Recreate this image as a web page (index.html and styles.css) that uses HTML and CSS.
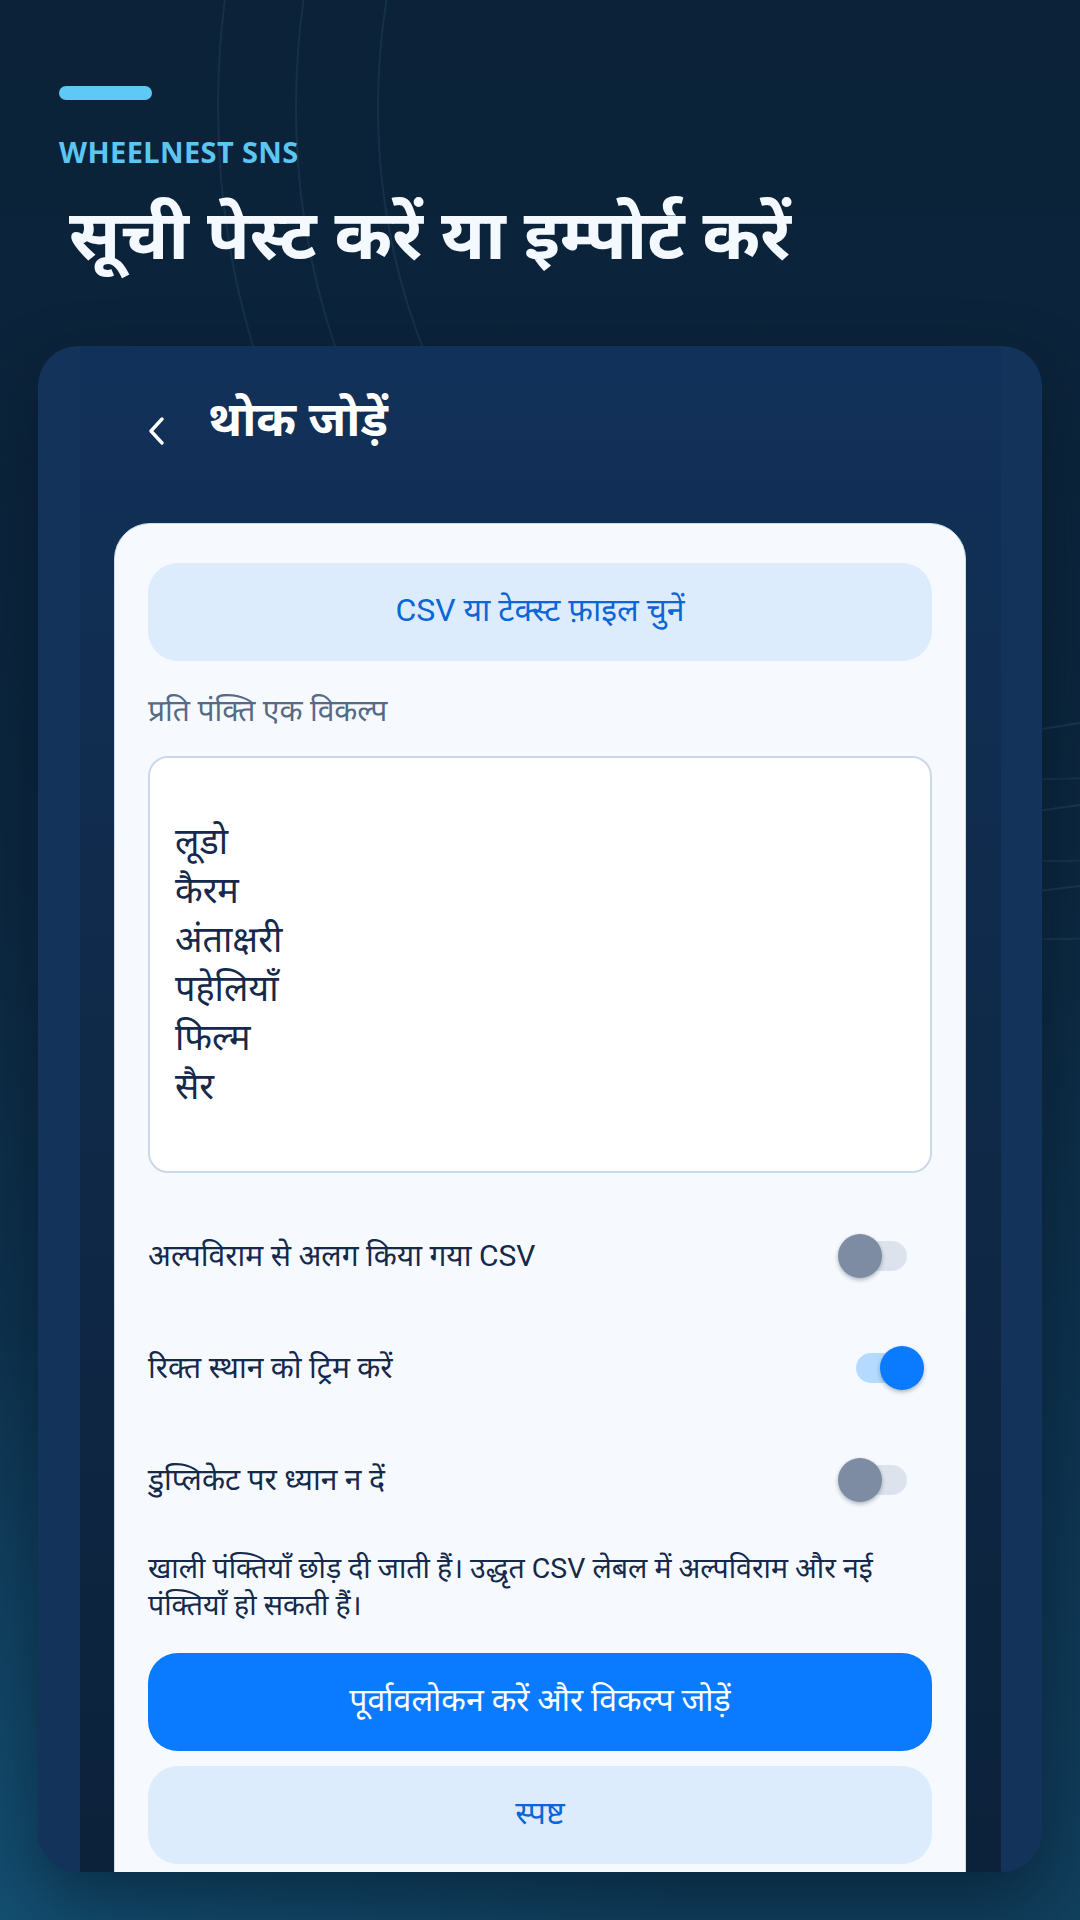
FILE: index.html
```html
<!DOCTYPE html>
<html lang="hi">
<head>
<meta charset="utf-8">
<title>थोक जोड़ें</title>
<link rel="stylesheet" href="styles.css">
</head>
<body>
<svg class="decor" width="1080" height="1920" viewBox="0 0 1080 1920" aria-hidden="true">
  <circle cx="1050" cy="107" r="832" fill="none" stroke="rgba(120,180,220,0.10)" stroke-width="2"/>
  <circle cx="1050" cy="107" r="754" fill="none" stroke="rgba(120,180,220,0.10)" stroke-width="2"/>
  <circle cx="1050" cy="107" r="672" fill="none" stroke="rgba(120,180,220,0.10)" stroke-width="2"/>
  <line x1="1030" y1="731" x2="1080" y2="723" stroke="rgba(120,180,220,0.12)" stroke-width="2"/>
  <line x1="1030" y1="812" x2="1080" y2="805" stroke="rgba(120,180,220,0.12)" stroke-width="2"/>
  <line x1="1030" y1="892" x2="1080" y2="886" stroke="rgba(120,180,220,0.12)" stroke-width="2"/>
</svg>

<header class="hero">
  <div class="accent"></div>
  <div class="brand">WHEELNEST SNS</div>
  <h1 class="hero-title">सूची पेस्ट करें या इम्पोर्ट करें</h1>
</header>

<main class="device">
  <div class="screen">
    <div class="topbar">
      <svg class="back" width="20" height="28" viewBox="0 0 20 28" aria-hidden="true">
        <polyline points="16,2 5,14 16,26" fill="none" stroke="#ffffff" stroke-width="3.4" stroke-linecap="round" stroke-linejoin="round"/>
      </svg>
      <div class="topbar-title">थोक जोड़ें</div>
    </div>

    <section class="card">
      <button class="btn btn-soft btn-file">CSV या टेक्स्ट फ़ाइल चुनें</button>
      <div class="field-label">प्रति पंक्ति एक विकल्प</div>
      <div class="textbox">
        <div>लूडो</div>
        <div>कैरम</div>
        <div>अंताक्षरी</div>
        <div>पहेलियाँ</div>
        <div>फिल्म</div>
        <div>सैर</div>
      </div>

      <div class="options">
        <div class="option">
          <span class="option-label">अल्पविराम से अलग किया गया CSV</span>
          <span class="switch"><span class="track"></span><span class="thumb"></span></span>
        </div>
        <div class="option">
          <span class="option-label">रिक्त स्थान को ट्रिम करें</span>
          <span class="switch on"><span class="track"></span><span class="thumb"></span></span>
        </div>
        <div class="option">
          <span class="option-label">डुप्लिकेट पर ध्यान न दें</span>
          <span class="switch"><span class="track"></span><span class="thumb"></span></span>
        </div>
      </div>

      <p class="hint">खाली पंक्तियाँ छोड़ दी जाती हैं। उद्धृत CSV लेबल में अल्पविराम और नई पंक्तियाँ हो सकती हैं।</p>

      <button class="btn btn-primary">पूर्वावलोकन करें और विकल्प जोड़ें</button>
      <button class="btn btn-soft btn-clear">स्पष्ट</button>
    </section>
  </div>
</main>
</body>
</html>
```

FILE: styles.css
```css
* { box-sizing: border-box; }

html, body {
  margin: 0;
  padding: 0;
}

body {
  width: 1080px;
  height: 1920px;
  overflow: hidden;
  position: relative;
  font-family: "Noto Sans", "Noto Sans Devanagari", sans-serif;
  background:
    radial-gradient(ellipse 700px 600px at 0% 100%, rgba(22, 92, 130, 0.55), rgba(22, 92, 130, 0) 100%),
    linear-gradient(180deg, #0b2238 0%, #0c2840 45%, #0f3754 80%, #11405e 100%);
}

.decor {
  position: absolute;
  left: 0;
  top: 0;
  z-index: 0;
}

.hero {
  position: relative;
  z-index: 1;
  padding: 86px 0 0 59px;
  height: 346px;
}

.accent {
  width: 93px;
  height: 14px;
  border-radius: 7px;
  background: #5ec9f4;
}

.brand {
  margin-top: 33px;
  font-size: 29px;
  font-weight: 700;
  line-height: 38px;
  color: #5bc6f2;
  letter-spacing: 0.4px;
}

.hero-title {
  margin: 16px 0 0 10px;
  font-size: 69.5px;
  font-weight: 700;
  line-height: 90px;
  color: #f4f8ff;
  white-space: nowrap;
}

.device {
  position: relative;
  z-index: 1;
  margin-left: 38px;
  width: 1004px;
  height: 1526px;
  border-radius: 40px;
  background: #13335a;
  padding: 0 41px 0 42px;
  overflow: hidden;
  box-shadow: 0 30px 70px rgba(2, 12, 24, 0.45);
}

.screen {
  height: 100%;
  background: linear-gradient(180deg, #12315a 0%, #102b4c 35%, #0e2642 70%, #0c223b 100%);
  padding: 0 35px 0 34px;
}

.topbar {
  height: 177px;
  display: flex;
  align-items: flex-start;
  padding-top: 38px;
}

.back {
  margin: 33px 0 0 32px;
  flex: none;
}

.topbar-title {
  margin-left: 42px;
  font-size: 48px;
  font-weight: 700;
  line-height: 67px;
  color: #ffffff;
  white-space: nowrap;
}

.card {
  background: #f6faff;
  border: 1px solid #cfdbeb;
  border-radius: 36px 36px 0 0;
  padding: 39px 33px 40px 33px;
  font-family: Roboto, "Noto Sans Devanagari", sans-serif;
  color: #15294a;
}

.btn {
  display: block;
  width: 100%;
  height: 98px;
  border: none;
  border-radius: 30px;
  font-family: Roboto, "Noto Sans Devanagari", sans-serif;
  font-size: 32px;
  text-align: center;
  padding: 0;
}

.btn-soft {
  background: #ddecfc;
  color: #0b66d8;
}

.btn-primary {
  margin-top: 29px;
  background: #0a7bff;
  color: #ffffff;
}

.btn-clear {
  margin-top: 15px;
}

.field-label {
  margin-top: 30px;
  font-size: 30px;
  line-height: 40px;
  color: #566a85;
}

.textbox {
  margin-top: 25px;
  height: 417px;
  border: 2px solid #cad8ea;
  border-radius: 20px;
  background: #ffffff;
  padding: 60px 25px 0 25px;
  font-size: 36px;
  line-height: 49px;
  color: #15294a;
}

.options {
  margin-top: 27px;
}

.option {
  height: 112px;
  display: flex;
  align-items: center;
  justify-content: space-between;
}

.option-label {
  font-size: 30px;
  line-height: 40px;
}

.switch {
  position: relative;
  width: 86px;
  height: 44px;
  margin-right: 8px;
  flex: none;
}

.switch .track {
  position: absolute;
  left: 18px;
  top: 7px;
  width: 51px;
  height: 30px;
  border-radius: 15px;
  background: #dde3ec;
}

.switch .thumb {
  position: absolute;
  left: 0;
  top: 0;
  width: 44px;
  height: 44px;
  border-radius: 50%;
  background: #7d8ca3;
  box-shadow: 0 2px 4px rgba(10, 20, 40, 0.3);
}

.switch.on .track {
  background: #b4dbff;
}

.switch.on .thumb {
  left: auto;
  right: 0;
  background: #0a7bff;
}

.hint {
  margin: 14px 0 0 0;
  font-size: 28.5px;
  line-height: 37px;
  color: #15294a;
}
```
